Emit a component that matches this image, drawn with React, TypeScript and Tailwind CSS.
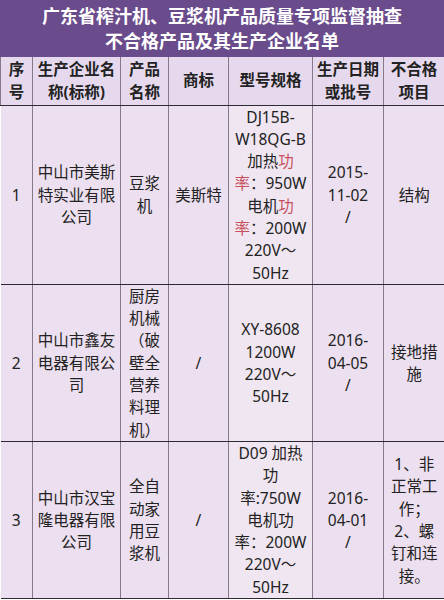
const font = { fontFamily: '"Noto Sans", "Noto Sans CJK SC", sans-serif' }

const Red = ({ children }: { children: React.ReactNode }) => <span className="text-[#c8505c]">{children}</span>

type Row = {
  no: string
  company: React.ReactNode
  product: React.ReactNode
  brand: string
  spec: React.ReactNode
  date: React.ReactNode
  item: React.ReactNode
  h: string
}

const rows: Row[] = [
  {
    no: '1',
    company: <>中山市美斯<br />特实业有限<br />公司</>,
    product: <>豆浆<br />机</>,
    brand: '美斯特',
    spec: (
      <>
        DJ15B-<br />W18QG-B<br />加热<Red>功</Red><br /><Red>率</Red>：950W<br />电机<Red>功</Red><br /><Red>率</Red>：200W<br />220V～<br />50Hz
      </>
    ),
    date: <>2015-<br />11-02<br />/</>,
    item: <>结构</>,
    h: 'h-[178px]',
  },
  {
    no: '2',
    company: <>中山市鑫友<br />电器有限公<br />司</>,
    product: <>厨房<br />机械<br />（破<br />壁全<br />营养<br />料理<br />机）</>,
    brand: '/',
    spec: <>XY-8608<br />1200W<br />220V～<br />50Hz</>,
    date: <>2016-<br />04-05<br />/</>,
    item: <>接地措<br />施</>,
    h: 'h-[157px]',
  },
  {
    no: '3',
    company: <>中山市汉宝<br />隆电器有限<br />公司</>,
    product: <>全自<br />动家<br />用豆<br />浆机</>,
    brand: '/',
    spec: <>D09 加热<br />功<br />率:750W<br />电机功<br />率：200W<br />220V～<br />50Hz</>,
    date: <>2016-<br />04-01<br />/</>,
    item: <>1、非<br />正常工<br />作；<br />2、螺<br />钉和连<br />接。</>,
    h: 'h-[157px]',
  },
]

const headers = [
  <>序<br />号</>,
  <>生产企业名<br />称(标称)</>,
  <>产品<br />名称</>,
  <>商标</>,
  <>型号规格</>,
  <>生产日期<br />或批号</>,
  <>不合格<br />项目</>,
]

const widths = ['w-[32px]', 'w-[88px]', 'w-[48px]', 'w-[60px]', 'w-[84px]', 'w-[71px]', 'w-[61px]']

const cell = 'border-x border-x-[#857a8c] border-y border-y-[#2e2a33] text-center align-middle p-0'

export default function App() {
  return (
    <div className="w-[444px] h-[600px] bg-white overflow-hidden" style={font}>
      <div className="h-[57px] bg-[#6a4b8b] flex flex-col items-center justify-center text-white font-bold text-[18px] leading-[25px] pt-[1px]">
        <div>广东省榨汁机、豆浆机产品质量专项监督抽查</div>
        <div>不合格产品及其生产企业名单</div>
      </div>
      <table className="w-[444px] table-fixed border-collapse text-[15.5px] text-[#222]">
        <colgroup>
          {widths.map((w, i) => (
            <col key={i} className={w} />
          ))}
        </colgroup>
        <thead>
          <tr className="h-[48px] bg-[#e6d9ee]">
            {headers.map((h, i) => (
              <th key={i} className={`${cell} font-bold leading-[23px] border-t-0`}>
                {h}
              </th>
            ))}
          </tr>
        </thead>
        <tbody className="bg-[#ecdfef] leading-[22.3px]">
          {rows.map((r) => (
            <tr key={r.no} className={r.h}>
              <td className={`${cell} border-l-0`}>{r.no}</td>
              <td className={cell}>{r.company}</td>
              <td className={cell}>{r.product}</td>
              <td className={cell}>{r.brand}</td>
              <td className={`${cell} bg-[#efe6f1]`}>{r.spec}</td>
              <td className={cell}>{r.date}</td>
              <td className={`${cell} border-r-0`}>{r.item}</td>
            </tr>
          ))}
        </tbody>
      </table>
    </div>
  )
}
